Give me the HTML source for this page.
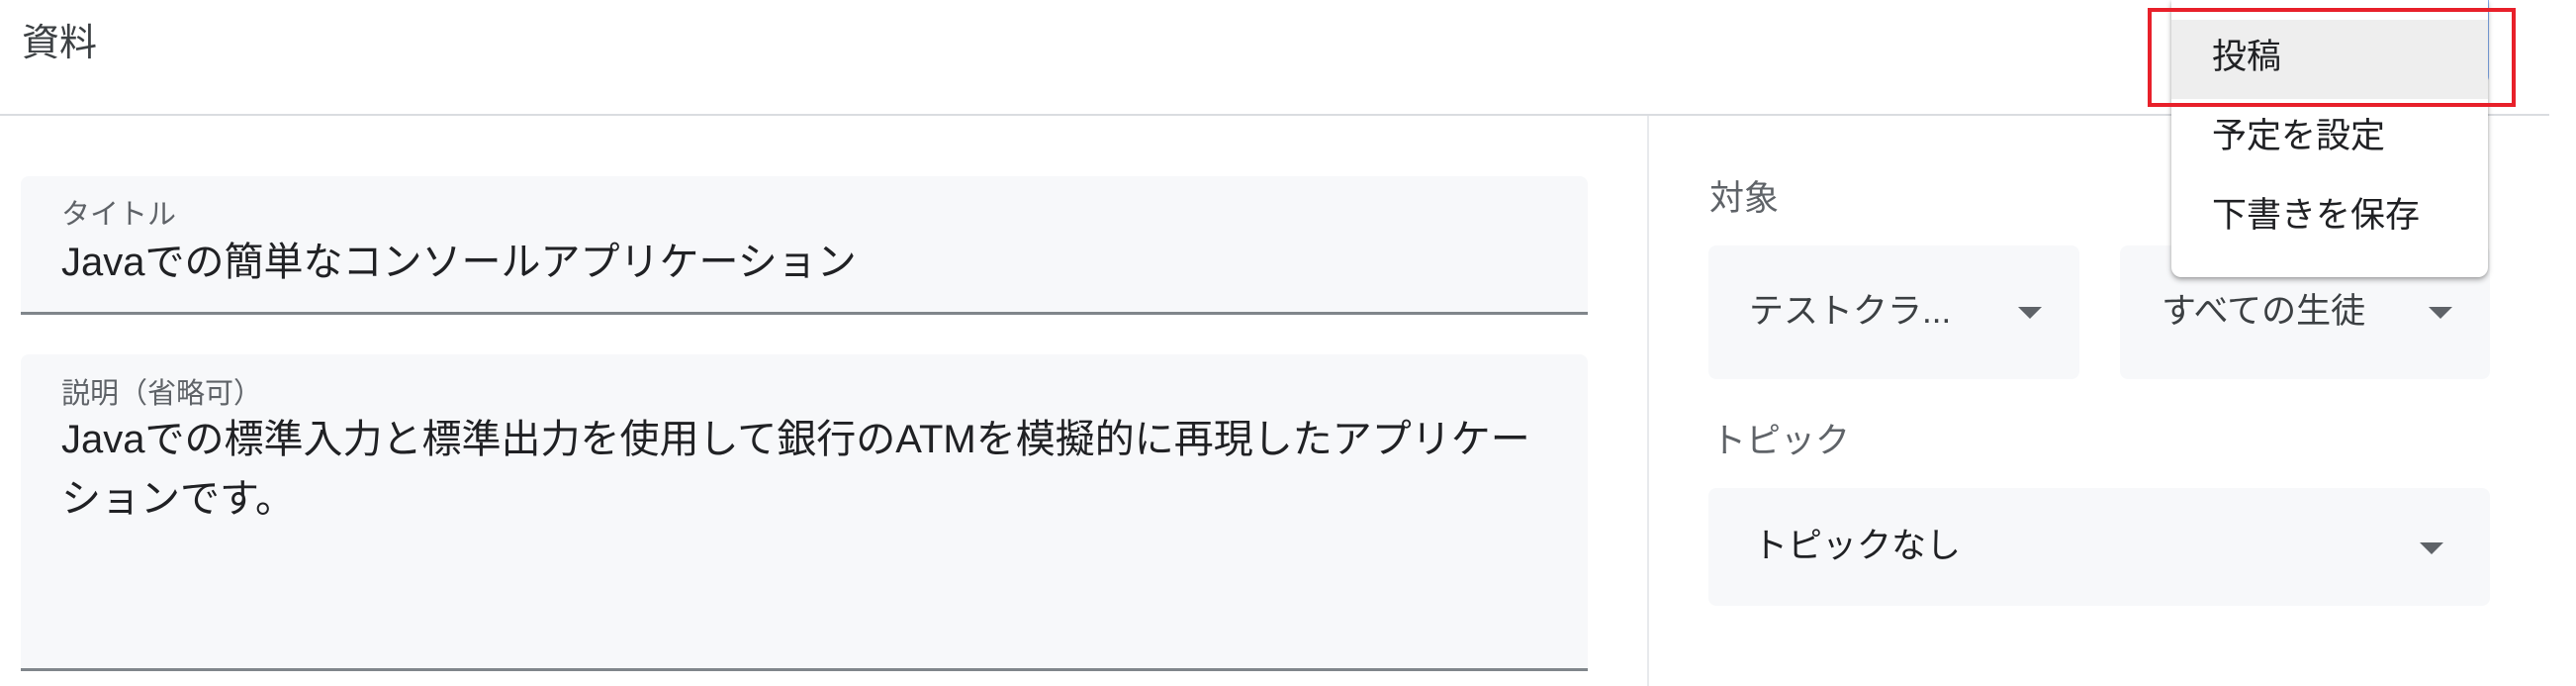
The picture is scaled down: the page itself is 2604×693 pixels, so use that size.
<!DOCTYPE html>
<html><head><meta charset="utf-8"><style>
*{margin:0;padding:0;box-sizing:border-box}
body{width:2604px;height:693px;background:#fff;position:relative;overflow:hidden;font-family:"Liberation Sans","Noto Sans CJK JP",sans-serif;color:#202124}
.a{position:absolute;white-space:nowrap}
.box{position:absolute;background:#f7f8fa;border-radius:8px}
.field{position:absolute;background:#f7f8fa;border-radius:8px 8px 0 0;border-bottom:3px solid #80868b}
.arr{position:absolute;width:0;height:0;border-left:12px solid transparent;border-right:12px solid transparent;border-top:12px solid #5f6368}
.lbl{color:#5f6368}
</style></head><body>
<div class="a" style="left:22px;top:22px;font-size:38px;line-height:44px;color:#3c4043">資料</div>
<div class="a" style="left:0;top:115px;width:2577px;height:2px;background:#dadce0"></div>
<div class="a" style="left:1665px;top:117px;width:2px;height:576px;background:#e8eaed"></div>

<div class="field" style="left:21px;top:178px;width:1584px;height:140px"></div>
<div class="a lbl" style="left:62px;top:200px;font-size:29px;line-height:34px">タイトル</div>
<div class="a" style="left:62px;top:243px;font-size:40px;line-height:44px">Javaでの簡単なコンソールアプリケーション</div>

<div class="field" style="left:21px;top:358px;width:1584px;height:320px"></div>
<div class="a lbl" style="left:62px;top:381px;font-size:29px;line-height:34px">説明（省略可）</div>
<div class="a" style="left:62px;top:414px;font-size:40px;line-height:60px">Javaでの標準入力と標準出力を使用して銀行のATMを模擬的に再現したアプリケー<br>ションです。</div>

<div class="a lbl" style="left:1728px;top:181px;font-size:35px;line-height:40px">対象</div>
<div class="box" style="left:1727px;top:248px;width:375px;height:135px"></div>
<div class="a" style="left:1768px;top:295px;font-size:35px;line-height:40px;color:#3c4043">テストクラ...</div>
<div class="arr" style="left:2040px;top:310px"></div>
<div class="box" style="left:2143px;top:248px;width:374px;height:135px"></div>
<div class="a" style="left:2185px;top:295px;font-size:35px;line-height:40px;color:#3c4043">すべての生徒</div>
<div class="arr" style="left:2455px;top:310px"></div>

<div class="a lbl" style="left:1730px;top:426px;font-size:35px;line-height:40px">トピック</div>
<div class="box" style="left:1727px;top:493px;width:790px;height:119px"></div>
<div class="a" style="left:1772px;top:532px;font-size:35px;line-height:40px;color:#202124">トピックなし</div>
<div class="arr" style="left:2446px;top:548px"></div>

<div class="a" style="left:2480px;top:0;width:36px;height:85px;border-right:2px solid #8ab4f8;border-bottom-right-radius:8px"></div>
<div class="a" style="left:2195px;top:0;width:320px;height:280px;background:#fff;border-radius:0 0 10px 10px;box-shadow:0 3px 6px rgba(0,0,0,.28),0 1px 3px rgba(0,0,0,.15)"></div>
<div class="a" style="left:2195px;top:20px;width:320px;height:80px;background:#eeeeee"></div>
<div class="a" style="left:2236px;top:38px;font-size:35px;line-height:40px;color:#202124">投稿</div>
<div class="a" style="left:2236px;top:118px;font-size:35px;line-height:40px;color:#202124">予定を設定</div>
<div class="a" style="left:2236px;top:198px;font-size:35px;line-height:40px;color:#202124">下書きを保存</div>
<div class="a" style="left:2171px;top:8px;width:372px;height:100px;border:4px solid #e8202a"></div>
</body></html>
